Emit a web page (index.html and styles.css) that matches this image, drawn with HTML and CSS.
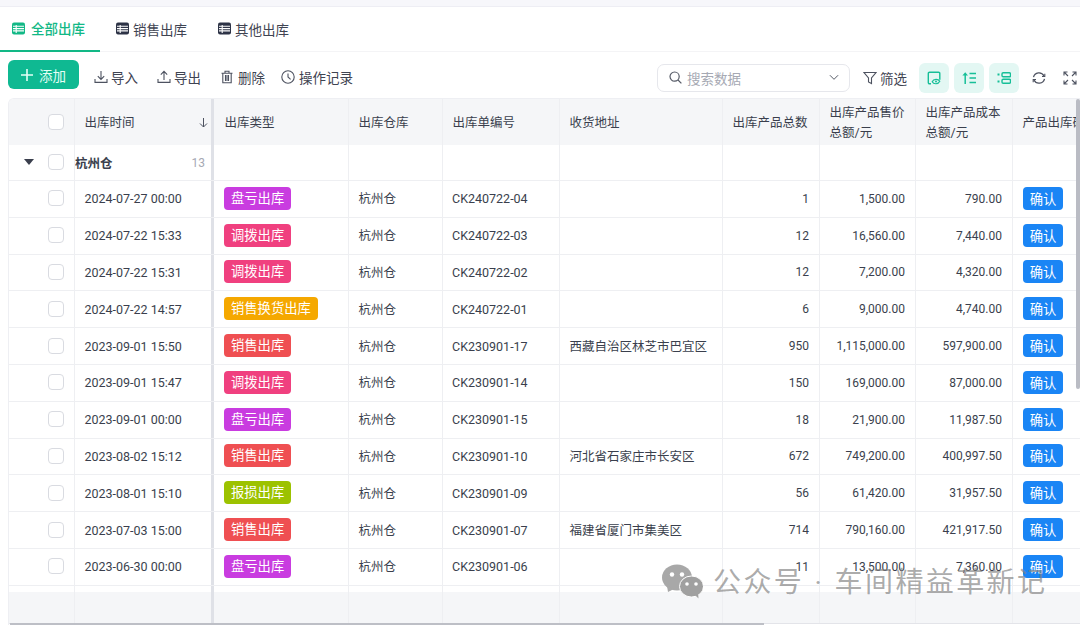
FILE: index.html
```html
<!DOCTYPE html>
<html lang="zh">
<head>
<meta charset="utf-8">
<title>出库</title>
<link rel="stylesheet" href="styles.css">
</head>
<body>
<div class="topstrip"></div>
<nav class="tabs">
  <a class="tab active"><svg class="tabicon" viewBox="0 0 13 13"><rect width="13" height="12" y=".5" rx="2" fill="currentColor"/><path d="M1 4.300h11M1 6.600h11M1 8.900h11M4.200 3v8" stroke="#fff" stroke-width="1.100" fill="none"/></svg>全部出库</a>
  <a class="tab"><svg class="tabicon" viewBox="0 0 13 13"><rect width="13" height="12" y=".5" rx="2" fill="currentColor"/><path d="M1 4.300h11M1 6.600h11M1 8.900h11M4.200 3v8" stroke="#fff" stroke-width="1.100" fill="none"/></svg>销售出库</a>
  <a class="tab"><svg class="tabicon" viewBox="0 0 13 13"><rect width="13" height="12" y=".5" rx="2" fill="currentColor"/><path d="M1 4.300h11M1 6.600h11M1 8.900h11M4.200 3v8" stroke="#fff" stroke-width="1.100" fill="none"/></svg>其他出库</a>
</nav>
<div class="toolbar">
  <button class="add"><svg class="plus" viewBox="0 0 12 12"><path d="M6 0v12M0 6h12" stroke="currentColor" stroke-width="1.600" fill="none"/></svg>添加</button>
  <a class="act"><svg class="ico" viewBox="0 0 14 14"><path d="M7 1v8.200M3.800 6.200 7 9.400l3.200-3.200M1 9v3.400h12V9" stroke="currentColor" stroke-width="1.100" fill="none"/></svg>导入</a>
  <a class="act"><svg class="ico" viewBox="0 0 14 14"><path d="M7 10V1.400M3.800 4.600 7 1.400l3.200 3.200M1 9v3.400h12V9" stroke="currentColor" stroke-width="1.100" fill="none"/></svg>导出</a>
  <a class="act del"><svg class="ico" viewBox="0 0 14 14"><path d="M1.500 3.200h11M5 3V1.300h4V3M2.800 3.200v9.500h8.400V3.200M5.500 5v6M7 5v6M8.500 5v6" stroke="currentColor" stroke-width="1.100" fill="none"/></svg>删除</a>
  <a class="act log"><svg class="ico" viewBox="0 0 14 14"><circle cx="7" cy="7" r="6.200" stroke="currentColor" stroke-width="1.100" fill="none"/><path d="M7 3.400V7l2.600 2.400" stroke="currentColor" stroke-width="1.100" fill="none"/></svg>操作记录</a>
  <div class="toolright">
    <div class="search">
      <svg class="searchicon" viewBox="0 0 13 13"><circle cx="5.600" cy="5.600" r="4.600" stroke="currentColor" stroke-width="1.200" fill="none"/><path d="m9 9 3.400 3.400" stroke="currentColor" stroke-width="1.200"/></svg>
      <span class="ph">搜索数据</span>
      <svg class="caret" viewBox="0 0 11 7"><path d="m1 1 4.500 4.500L10 1" stroke="currentColor" stroke-width="1.100" fill="none"/></svg>
    </div>
    <a class="act filter"><svg class="ico" viewBox="0 0 14 14"><path d="M1 1.500h12L8.500 7v5.500L5.500 11V7z" stroke="currentColor" stroke-width="1.100" fill="none"/></svg>筛选</a>
    <span class="mint"><svg viewBox="0 0 14 14"><path d="M4 12.800H2.500a1.200 1.200 0 0 1-1.200-1.200V2.400a1.200 1.200 0 0 1 1.200-1.200h9.100a1.200 1.200 0 0 1 1.200 1.200v6.400" stroke="currentColor" stroke-width="1.400" fill="none"/><path d="M5.200 10.800c1.400-3.200 6-3.200 7.600-.5-1.600 3.200-6.200 3.200-7.600.5z" stroke="currentColor" stroke-width="1.200" fill="#e3f7f3"/><circle cx="9" cy="10.500" r="1" fill="currentColor"/></svg></span>
    <span class="mint"><svg viewBox="0 0 14 14"><path d="M3.200 13V3" stroke="currentColor" stroke-width="1.500" fill="none"/><path d="M.4 4.400 3.200 1.300 6 4.400z" fill="currentColor"/><path d="M7.500 2.500H14M7.500 7H14M7.500 11.500H14" stroke="currentColor" stroke-width="1.500" fill="none"/></svg></span>
    <span class="mint"><svg viewBox="0 0 14 14"><path d="M.5 3.500h2M.5 10.500h2" stroke="currentColor" stroke-width="2.200" fill="none"/><rect x="5" y="1.800" width="8.500" height="4" rx="1.200" stroke="currentColor" stroke-width="1.400" fill="none"/><rect x="5" y="8.200" width="8.500" height="4" rx="1.200" stroke="currentColor" stroke-width="1.400" fill="none"/></svg></span>
    <span class="plain first"><svg viewBox="0 0 14 14"><path d="M1.500 6.200A5.600 5.600 0 0 1 12 5M12.500 7.800A5.600 5.600 0 0 1 2 9" stroke="currentColor" stroke-width="1.300" fill="none"/><path d="M12.800 2.800V5.500H10M1.200 11.200V8.500H4" stroke="currentColor" stroke-width="1.100" fill="none"/></svg></span>
    <span class="plain"><svg viewBox="0 0 14 14"><path d="M1 4.500V1h3.500M9.500 1H13v3.500M13 9.500V13H9.500M4.500 13H1V9.500M1.500 1.500l3.500 3.500M12.500 1.500 9 5M12.500 12.500 9 9M1.500 12.500 5 9" stroke="currentColor" stroke-width="1.100" fill="none"/></svg></span>
  </div>
</div>

<section class="grid">
  <div class="row head">
    <div class="c c1"><i class="cb"></i></div>
    <div class="c c2"><span>出库时间</span><svg class="sort" viewBox="0 0 9 10"><path d="M4.500 0v9M1 5.500 4.500 9 8 5.500" stroke="currentColor" stroke-width="1" fill="none"/></svg></div>
    <div class="c c3">出库类型</div>
    <div class="c">出库仓库</div>
    <div class="c">出库单编号</div>
    <div class="c">收货地址</div>
    <div class="c">出库产品总数</div>
    <div class="c"><span>出库产品售价<br>总额/元</span></div>
    <div class="c"><span>出库产品成本<br>总额/元</span></div>
    <div class="c clip">产品出库确认</div>
  </div>
  <div class="row group">
    <div class="c c1"><i class="tri"></i><i class="cb"></i></div>
    <div class="c c2 gname"><b>杭州仓</b><em>13</em></div>
    <div class="c c3"></div><div class="c"></div><div class="c"></div><div class="c"></div><div class="c"></div><div class="c"></div><div class="c"></div><div class="c"></div>
  </div>
  <div class="row"><div class="c c1"><i class="cb"></i></div><div class="c c2 d">2024-07-27 00:00</div><div class="c c3"><span class="tag purple">盘亏出库</span></div><div class="c">杭州仓</div><div class="c code">CK240722-04</div><div class="c"></div><div class="c n">1</div><div class="c n">1,500.00</div><div class="c n">790.00</div><div class="c"><button class="ok">确认</button></div></div>
  <div class="row"><div class="c c1"><i class="cb"></i></div><div class="c c2 d">2024-07-22 15:33</div><div class="c c3"><span class="tag pink">调拨出库</span></div><div class="c">杭州仓</div><div class="c code">CK240722-03</div><div class="c"></div><div class="c n">12</div><div class="c n">16,560.00</div><div class="c n">7,440.00</div><div class="c"><button class="ok">确认</button></div></div>
  <div class="row"><div class="c c1"><i class="cb"></i></div><div class="c c2 d">2024-07-22 15:31</div><div class="c c3"><span class="tag pink">调拨出库</span></div><div class="c">杭州仓</div><div class="c code">CK240722-02</div><div class="c"></div><div class="c n">12</div><div class="c n">7,200.00</div><div class="c n">4,320.00</div><div class="c"><button class="ok">确认</button></div></div>
  <div class="row"><div class="c c1"><i class="cb"></i></div><div class="c c2 d">2024-07-22 14:57</div><div class="c c3"><span class="tag amber">销售换货出库</span></div><div class="c">杭州仓</div><div class="c code">CK240722-01</div><div class="c"></div><div class="c n">6</div><div class="c n">9,000.00</div><div class="c n">4,740.00</div><div class="c"><button class="ok">确认</button></div></div>
  <div class="row"><div class="c c1"><i class="cb"></i></div><div class="c c2 d">2023-09-01 15:50</div><div class="c c3"><span class="tag red">销售出库</span></div><div class="c">杭州仓</div><div class="c code">CK230901-17</div><div class="c">西藏自治区林芝市巴宜区</div><div class="c n">950</div><div class="c n">1,115,000.00</div><div class="c n">597,900.00</div><div class="c"><button class="ok">确认</button></div></div>
  <div class="row"><div class="c c1"><i class="cb"></i></div><div class="c c2 d">2023-09-01 15:47</div><div class="c c3"><span class="tag pink">调拨出库</span></div><div class="c">杭州仓</div><div class="c code">CK230901-14</div><div class="c"></div><div class="c n">150</div><div class="c n">169,000.00</div><div class="c n">87,000.00</div><div class="c"><button class="ok">确认</button></div></div>
  <div class="row"><div class="c c1"><i class="cb"></i></div><div class="c c2 d">2023-09-01 00:00</div><div class="c c3"><span class="tag purple">盘亏出库</span></div><div class="c">杭州仓</div><div class="c code">CK230901-15</div><div class="c"></div><div class="c n">18</div><div class="c n">21,900.00</div><div class="c n">11,987.50</div><div class="c"><button class="ok">确认</button></div></div>
  <div class="row"><div class="c c1"><i class="cb"></i></div><div class="c c2 d">2023-08-02 15:12</div><div class="c c3"><span class="tag red">销售出库</span></div><div class="c">杭州仓</div><div class="c code">CK230901-10</div><div class="c">河北省石家庄市长安区</div><div class="c n">672</div><div class="c n">749,200.00</div><div class="c n">400,997.50</div><div class="c"><button class="ok">确认</button></div></div>
  <div class="row"><div class="c c1"><i class="cb"></i></div><div class="c c2 d">2023-08-01 15:10</div><div class="c c3"><span class="tag lime">报损出库</span></div><div class="c">杭州仓</div><div class="c code">CK230901-09</div><div class="c"></div><div class="c n">56</div><div class="c n">61,420.00</div><div class="c n">31,957.50</div><div class="c"><button class="ok">确认</button></div></div>
  <div class="row"><div class="c c1"><i class="cb"></i></div><div class="c c2 d">2023-07-03 15:00</div><div class="c c3"><span class="tag red">销售出库</span></div><div class="c">杭州仓</div><div class="c code">CK230901-07</div><div class="c">福建省厦门市集美区</div><div class="c n">714</div><div class="c n">790,160.00</div><div class="c n">421,917.50</div><div class="c"><button class="ok">确认</button></div></div>
  <div class="row"><div class="c c1"><i class="cb"></i></div><div class="c c2 d">2023-06-30 00:00</div><div class="c c3"><span class="tag purple">盘亏出库</span></div><div class="c">杭州仓</div><div class="c code">CK230901-06</div><div class="c"></div><div class="c n">11</div><div class="c n">13,500.00</div><div class="c n">7,360.00</div><div class="c"><button class="ok">确认</button></div></div>
  <div class="row gap">
    <div class="c c1"></div><div class="c c2"></div><div class="c c3"></div><div class="c"></div><div class="c"></div><div class="c"></div><div class="c"></div><div class="c"></div><div class="c"></div><div class="c"></div>
  </div>
  <div class="row foot">
    <div class="c c1"></div><div class="c c2"></div><div class="c c3"></div><div class="c"></div><div class="c"></div><div class="c"></div><div class="c"></div><div class="c"></div><div class="c"></div><div class="c"></div>
  </div>
  <div class="vbar"></div>
  <div class="hbar"></div>
</section>

<div class="watermark">
  <svg class="wechat" viewBox="0 0 41 35"><ellipse cx="15" cy="13.500" rx="15" ry="13" fill="#a8a8a8"/><path d="M5 22l1 6 6-3z" fill="#a8a8a8"/><ellipse cx="29.500" cy="22.500" rx="12" ry="10.500" fill="#a0a0a0" stroke="#fff" stroke-width="1"/><path d="M33 31l3.500 3.500-.5-6z" fill="#a0a0a0"/><circle cx="10" cy="10.500" r="2.200" fill="#fff"/><circle cx="20" cy="10.500" r="2.200" fill="#fff"/><circle cx="25" cy="20" r="1.800" fill="#fff"/><circle cx="34" cy="20" r="1.800" fill="#fff"/></svg>
  <span class="wmtext">公众号 · 车间精益革新记</span>
</div>
</body>
</html>
```

FILE: styles.css
```css
* { box-sizing: border-box; }
html, body { margin: 0; height: 625px; overflow: hidden; background: #fff; }
body {
  font-family: Roboto, "Noto Sans CJK SC", sans-serif;
  font-size: 13.5px;
  color: #3a3f4d;
  position: relative;
}
.topstrip { height: 7px; background: #f7f7fb; border-bottom: 1px solid #eeeef4; }
.tabs { display: flex; height: 45px; border-bottom: 1px solid #f4f4f6; }
.tab {
  display: flex; align-items: center; gap: 4px;
  height: 45px; padding: 0 12px 2px; margin-right: 6px;
  color: #3f4452; width: 96px; flex: none;
}
.tab.active {
  color: #12b886; font-weight: 500; width: 100px; gap: 6px;
  border-bottom: 2px solid #12b886;
  padding-bottom: 1px;
  margin-right: 4px;
}
.tabicon { width: 13px; height: 13px; color: #2d3346; flex: none; }
.active .tabicon { color: #12b886; }
.toolbar { display: flex; align-items: center; height: 46px; padding: 0 3px 0 8px; }
.add {
  width: 71px; height: 29px; border: 0; border-radius: 6px;
  background: #0fb992; color: #e4fff6;
  font: inherit;
  display: flex; align-items: center; justify-content: center; gap: 6px;
  padding: 0; margin-right: 15px; margin-top: -1px; flex: none;
}
.plus { width: 12px; height: 12px; }
.act { display: flex; align-items: center; gap: 3px; color: #3f4452; margin-right: 19px; white-space: nowrap; margin-top: 4px; }
.del { gap: 4px; margin-right: 16px; }
.log { gap: 4px; }
.ico { width: 14px; height: 14px; flex: none; color: #4d5260; }
.toolright { display: flex; align-items: center; margin-left: auto; margin-top: 5px; }
.search {
  width: 193px; height: 28px; border: 1px solid #e6e7ec; border-radius: 7px;
  display: flex; align-items: center; padding: 0 10px 0 11px;
  margin-right: 13px;
}
.searchicon { width: 13px; height: 13px; color: #555a66; margin-right: 5px; flex: none; }
.ph { color: #a6a9b3; flex: 1; }
.caret { width: 10px; height: 7px; color: #555a66; }
.filter { margin: 0 12px 0 0; gap: 3px; }
.mint {
  width: 30px; height: 30px; background: #e3f7f3; border-radius: 6px; color: #17bf98;
  display: flex; align-items: center; justify-content: center; margin-right: 5px;
}
.mint svg { width: 14px; height: 14px; }
.plain { display: flex; align-items: center; color: #4d5260; margin-left: 17px; }
.plain.first { margin-left: 8px; }
.plain svg { width: 14px; height: 14px; }
.grid {
  margin-left: 8px; height: 527px; width: 1072px; overflow: hidden; position: relative;
  border-top: 1px solid #eeeff3; border-radius: 6px 0 0 0;
  border-left: 1px solid #eeeff3;
  font-size: 12.5px;
}
.row {
  display: grid;
  grid-template-columns: 66px 139px 135px 94px 117px 163px 97px 96px 97px 68px;
  height: 36.8px; border-bottom: 1px solid #eeeff2;
}
.c {
  display: flex; align-items: center; padding: 0 10px 0 9.500px;
  border-right: 1px solid #eeeff2; white-space: nowrap; overflow: hidden; color: #3a3f4d;
  min-width: 0;
}
.c:last-child { border-right: 0; }
.c:nth-child(4), .c:nth-child(6) { padding-bottom: 2px; }
.c1 { justify-content: flex-end; padding: 0 10px 1px 0; }
.c2 { border-right: 3px solid #dfe1e7; }
.c3 { padding: 0 10px 1px; }
.c:last-child { padding-bottom: 1px; }
.code { padding-left: 9px; }
.n { justify-content: flex-end; font-size: 12px; }
.head { height: 46px; background: #f5f6f8; border-bottom: 0; }
.head .c { line-height: 20px; padding-top: 2px; padding-bottom: 0; }
.head .c1 { padding-top: 0; }
.head .c2 { justify-content: space-between; padding-right: 3px; }
.head .c3 { padding-left: 10.500px; }
.sort { width: 9px; height: 10px; color: #4d5260; }
.group { height: 36px; }
.cb { display: block; width: 16px; height: 16px; border: 1px solid #d9dbe1; border-radius: 4px; background: #fff; flex: none; }
.group .c1 { justify-content: space-between; padding-left: 15px; }
.tri { width: 0; height: 0; border-left: 5px solid transparent; border-right: 5px solid transparent; border-top: 6px solid #3a3f4d; }
.gname { justify-content: space-between; padding: 0 6px 0 0; }
.gname b { font-weight: 700; }
.gname em { font-style: normal; color: #a6a9b3; font-size: 12px; }
.tag {
  display: block; height: 23px; line-height: 23px; padding: 0 7px; border-radius: 4px;
  color: #fff; font-size: 13.300px;
}
.purple { background: #c93ce0; }
.pink { background: #f0407f; }
.amber { background: #f5a800; }
.red { background: #ef4f52; }
.lime { background: #9cc200; }
.ok {
  width: 40px; height: 23px; border: 0; border-radius: 4px; background: #1a85f5;
  color: #fff; font: inherit; font-size: 13.300px; padding: 0; margin-left: .5px; flex: none;
}
.gap { height: 6px; border-bottom: 0; }
.foot { height: 32px; background: #f5f6f8; border-bottom: 1px solid #e3e4e9; }
.vbar { position: absolute; right: 0; top: 0; width: 4px; height: 290px; background: #babcc4; border-radius: 2px; }
.hbar { position: absolute; left: 1px; top: 524px; width: 754px; height: 2px; background: #bdbfc6; }
.watermark {
  position: absolute; left: 662px; top: 563px;
  display: flex; align-items: center; gap: 10px;
  color: rgba(130, 130, 130, .68); font-size: 28px; letter-spacing: 2.400px; word-spacing: 1px; white-space: nowrap;
}
.wmtext { margin-top: -3px; }
.wechat { width: 41px; height: 35px; }
```
